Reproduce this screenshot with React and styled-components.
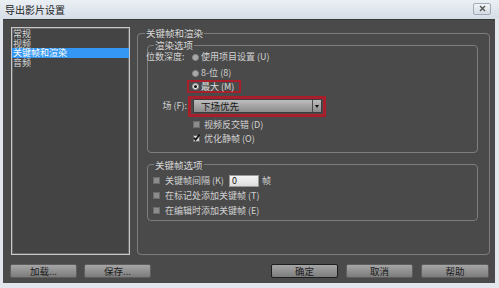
import React from "react";
import styled, { createGlobalStyle } from "styled-components";

const Global = createGlobalStyle`
  html, body { margin: 0; padding: 0; background: #e3e8ee; }
  body { font-family: "Noto Sans CJK SC", "Noto Sans", sans-serif; }
  * { box-sizing: border-box; }
`;

const Window = styled.div`
  width: 499px;
  height: 288px;
  display: flex;
  flex-direction: column;
  background: #e2e7ed;
  font-family: "Noto Sans CJK SC", "Noto Sans", sans-serif;
  font-size: 9px;
  line-height: 12px;
`;

const TitleBar = styled.div`
  height: 19px;
  flex: none;
  display: flex;
  align-items: center;
  justify-content: space-between;
  padding: 0 8px 0 5px;
  background: linear-gradient(#ebf0f5, #d6dde6);
  color: #222;
  font-size: 10px;
`;

const CloseBtn = styled.div`
  width: 18px;
  height: 12px;
  margin-top: -2px;
  border: 1px solid #a2acb8;
  border-radius: 2px;
  background: linear-gradient(#f2f5f8, #d4dbe3);
  display: flex;
  align-items: center;
  justify-content: center;
`;

const Body = styled.div`
  flex: 1;
  margin: 0 4px 5px 3px;
  background: #4a4a4a;
  border-top: 1px solid #3a3a3a;
  padding: 7px 5px 0 8px;
  display: flex;
  flex-direction: column;
`;

const MainRow = styled.div`
  display: flex;
  gap: 7px;
  height: 228px;
`;

const List = styled.div`
  width: 119px;
  flex: none;
  background: #444444;
  border: 1px solid #c8c8c8;
  box-shadow: inset 0 0 0 1px #6a6a6a;
  padding-top: 1px;
  display: flex;
  flex-direction: column;
`;

const ListItem = styled.div`
  height: 9.5px;
  line-height: 9.5px;
  padding-left: 1px;
  font-size: 9px;
  color: ${(p) => (p.$sel ? "#ffffff" : "#d6d6d6")};
  background: ${(p) => (p.$sel ? "#3397f3" : "transparent")};
  white-space: nowrap;
`;

const Group = styled.fieldset`
  margin: 0;
  min-width: 0;
  border: 1px solid #7d7d7d;
  border-radius: 4px;
  padding: ${(p) => p.$pad || "0"};
  margin-top: ${(p) => p.$mt || 0}px;
  ${(p) => p.$grow && "flex: 1;"}
  display: block;
`;

const Legend = styled.legend`
  padding: 0 1px;
  margin-left: ${(p) => p.$ml || 0}px;
  color: #d8d8d8;
  font-size: 9.5px;
  line-height: 12px;
`;

const Row = styled.div`
  display: flex;
  align-items: center;
  height: ${(p) => p.$h || 12}px;
  margin-top: ${(p) => p.$mt || 0}px;
  margin-left: ${(p) => p.$ml || 0}px;
  color: #d2d2d2;
  white-space: nowrap;
`;

const FieldLabel = styled.span`
  width: ${(p) => p.$w}px;
  flex: none;
  text-align: ${(p) => p.$align || "left"};
  padding-right: ${(p) => p.$pr || 0}px;
`;

const Radio = styled.span`
  width: 7px;
  height: 7px;
  flex: none;
  border-radius: 50%;
  background: ${(p) => (p.$on ? "#e8e8e8" : "#a9a9a9")};
  border: 1px solid ${(p) => (p.$on ? "#9a9a9a" : "#8a8a8a")};
  margin-right: 2px;
  display: flex;
  align-items: center;
  justify-content: center;
  &::after {
    content: "";
    display: ${(p) => (p.$on ? "block" : "none")};
    width: 3px;
    height: 3px;
    border-radius: 50%;
    background: #111;
  }
`;

const Highlight = styled.div`
  display: flex;
  align-items: center;
  border: ${(p) => p.$bw || 2}px solid #a81f2b;
  height: ${(p) => p.$h}px;
  width: ${(p) => p.$w}px;
  padding: ${(p) => p.$pad || "0"};
  margin-top: ${(p) => p.$mt || 0}px;
  margin-left: ${(p) => p.$ml || 0}px;
  color: #e0e0e0;
  white-space: nowrap;
`;

const Select = styled.div`
  flex: 1;
  height: 14px;
  display: flex;
  align-items: stretch;
  border: 1px solid #3c3c3c;
  background: linear-gradient(#bdbdbd, #8c8c8c);
  color: #151515;
  font-size: 9.5px;
`;

const SelectText = styled.span`
  flex: 1;
  padding-left: 7px;
  line-height: 12px;
`;

const SelectArrow = styled.span`
  width: 9px;
  border-left: 1px solid #4a4a4a;
  display: flex;
  align-items: center;
  justify-content: center;
  &::after {
    content: "";
    border-left: 2px solid transparent;
    border-right: 2px solid transparent;
    border-top: 3px solid #111;
  }
`;

const Check = styled.span`
  width: 7px;
  height: 7px;
  flex: none;
  background: ${(p) => (p.$on ? "#d4d4d4" : "#8c8c8c")};
  border: 1px solid #6c6c6c;
  margin-right: ${(p) => p.$mr || 4}px;
  display: flex;
  align-items: center;
  justify-content: center;
  position: relative;
`;

const CheckMark = styled.svg`
  position: absolute;
  left: -1px;
  top: -2px;
`;

const Field = styled.div`
  width: 30px;
  height: 12px;
  margin-left: 5px;
  margin-right: 3px;
  background: linear-gradient(#f4f4f4, #dcdcdc);
  border: 1px solid #9a9a9a;
  color: #111;
  padding-left: 2px;
  line-height: 10px;
  font-size: 9px;
`;

const ButtonRow = styled.div`
  display: flex;
  justify-content: space-between;
  margin: 9px 1px 0 -1px;
`;

const ButtonGroup = styled.div`
  display: flex;
  gap: ${(p) => p.$gap}px;
`;

const Button = styled.div`
  width: ${(p) => p.$w || 67}px;
  height: 14px;
  border: 1px solid ${(p) => (p.$def ? "#1e1e1e" : "#5e5e5e")};
  border-radius: 2px;
  background: linear-gradient(#a6a6a6, #7c7c7c);
  color: #1a1a1a;
  font-size: 9.5px;
  line-height: 12px;
  text-align: center;
`;

export default function App() {
  return (
    <Window>
      <Global />
      <TitleBar>
        <span>导出影片设置</span>
        <CloseBtn>
          <svg width="7" height="7" viewBox="0 0 7 7">
            <path d="M1 1L6 6M6 1L1 6" stroke="#555" strokeWidth="1.4" />
          </svg>
        </CloseBtn>
      </TitleBar>
      <Body>
        <MainRow>
          <List>
            <ListItem>常规</ListItem>
            <ListItem>视频</ListItem>
            <ListItem $sel>关键帧和渲染</ListItem>
            <ListItem>音频</ListItem>
          </List>
          <Group $grow $pad="0 11px 0 9px">
            <Legend $ml={-2}>关键帧和渲染</Legend>
            <Group $pad="0 0 7px 0">
              <Legend $ml={6}>渲染选项</Legend>
              <Row $ml={-2}>
                <FieldLabel $w={46}>位数深度:</FieldLabel>
                <Radio />
                <span>使用项目设置 (U)</span>
              </Row>
              <Row $mt={4} $ml={44}>
                <Radio />
                <span>8-位 (8)</span>
              </Row>
              <Highlight $mt={1} $ml={39} $h={13} $w={54} $pad="0 0 0 3px">
                <Radio $on />
                <span>最大 (M)</span>
              </Highlight>
              <Row $mt={2.5} $h={21}>
                <FieldLabel $w={40} $align="right" $pr={1}>场 (F):</FieldLabel>
                <Highlight $bw={3} $h={21} $w={138} $pad="0 1px 0 2px">
                  <Select>
                    <SelectText>下场优先</SelectText>
                    <SelectArrow />
                  </Select>
                </Highlight>
              </Row>
              <Row $mt={2} $ml={45}>
                <Check />
                <span>视频反交错 (D)</span>
              </Row>
              <Row $mt={2} $ml={45}>
                <Check $on>
                  <CheckMark width="7" height="7" viewBox="0 0 7 7">
                    <path d="M0.8 3.8L2.6 5.8L6.6 0.6" stroke="#111" strokeWidth="1.6" fill="none" />
                  </CheckMark>
                </Check>
                <span>优化静帧 (O)</span>
              </Row>
            </Group>
            <Group $mt={6} $pad="0 0 3px 0">
              <Legend $ml={6}>关键帧选项</Legend>
              <Row $mt={4} $ml={5}>
                <Check $mr={5} />
                <span>关键帧间隔 (K)</span>
                <Field>0</Field>
                <span>帧</span>
              </Row>
              <Row $mt={3} $ml={5}>
                <Check $mr={5} />
                <span>在标记处添加关键帧 (T)</span>
              </Row>
              <Row $mt={3} $ml={5}>
                <Check $mr={5} />
                <span>在编辑时添加关键帧 (E)</span>
              </Row>
            </Group>
          </Group>
        </MainRow>
        <ButtonRow>
          <ButtonGroup $gap={7}>
            <Button>加载...</Button>
            <Button>保存...</Button>
          </ButtonGroup>
          <ButtonGroup $gap={8}>
            <Button $def>确定</Button>
            <Button>取消</Button>
            <Button $w={68}>帮助</Button>
          </ButtonGroup>
        </ButtonRow>
      </Body>
    </Window>
  );
}
